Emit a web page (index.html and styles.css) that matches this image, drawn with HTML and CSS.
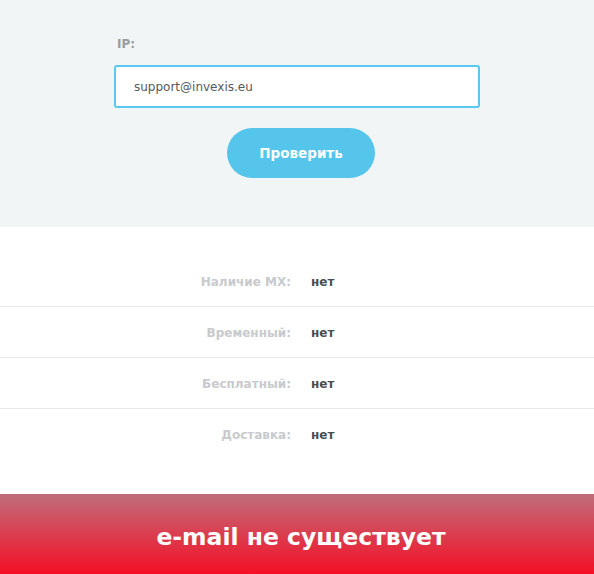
FILE: index.html
```html
<!DOCTYPE html>
<html lang="ru">
<head>
<meta charset="utf-8">
<link rel="stylesheet" href="styles.css">
</head>
<body>
<section class="top">
  <div class="form">
    <label class="label">IP:</label>
    <div class="field">support@invexis.eu</div>
    <div class="actions"><button class="btn">Проверить</button></div>
  </div>
</section>
<section class="results">
  <div class="row"><span class="key">Наличие MX:</span><span class="val">нет</span></div>
  <div class="row"><span class="key">Временный:</span><span class="val">нет</span></div>
  <div class="row"><span class="key">Бесплатный:</span><span class="val">нет</span></div>
  <div class="row last"><span class="key">Доставка:</span><span class="val">нет</span></div>
</section>
<section class="banner">e-mail не существует</section>
</body>
</html>
```
FILE: styles.css
```css
* { box-sizing: border-box; }
html, body { margin: 0; padding: 0; }
body {
  font-family: "DejaVu Sans", "Noto Sans", sans-serif;
  background: #fff;
  width: 594px;
}
.top {
  background: #f2f5f6;
  height: 227px;
  padding-top: 36px;
}
.form {
  width: 366px;
  margin: 0 auto;
}
.label {
  display: block;
  padding-left: 3px;
  font-size: 12px;
  font-weight: bold;
  color: #9b9b9b;
  line-height: 16px;
}
.field {
  margin-top: 13px;
  height: 43px;
  border: 2px solid #5ac8f0;
  border-radius: 3px;
  background: #fff;
  padding-left: 18px;
  font-size: 12px;
  color: #555a60;
  display: flex;
  align-items: center;
}
.actions {
  display: flex;
  justify-content: center;
  margin-top: 20px;
  padding-left: 8px;
}
.btn {
  width: 148px;
  height: 50px;
  border: 0;
  border-radius: 25px;
  background: #56c5ec;
  color: #fff;
  font-family: inherit;
  font-size: 13.5px;
  font-weight: bold;
}
.results {
  padding: 29px 0 34px;
}
.row {
  display: flex;
  align-items: center;
  height: 51px;
  padding-top: 1px;
  border-bottom: 1px solid #e8e8e8;
}
.row.last { border-bottom: 0; }
.key {
  width: 291px;
  text-align: right;
  font-size: 12px;
  font-weight: bold;
  color: #c8cacd;
}
.val {
  margin-left: 20px;
  font-size: 12px;
  font-weight: bold;
  color: #4a4d52;
}
.banner {
  height: 80px;
  background: linear-gradient(to bottom, #c06d7b 0%, #f50f25 100%);
  color: #fff;
  font-size: 23.5px;
  font-weight: bold;
  display: flex;
  align-items: center;
  justify-content: center;
  padding: 6px 0 0 8px;
}
```
